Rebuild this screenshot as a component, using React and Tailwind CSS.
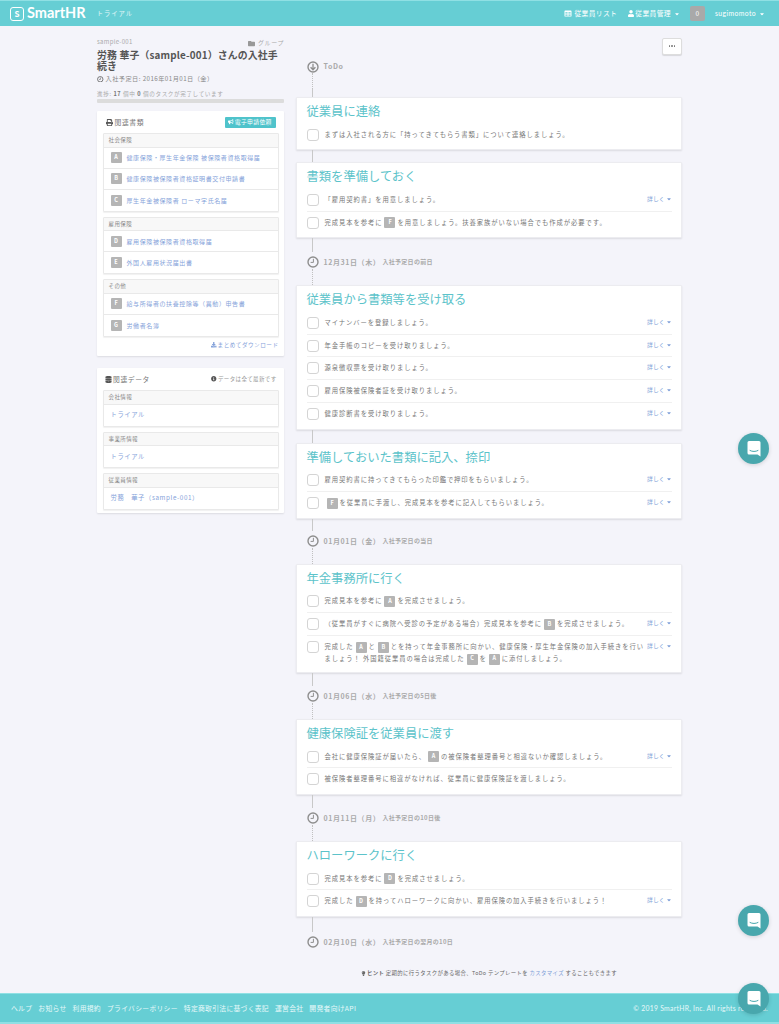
import React from "react";
import { FaTable, FaUser, FaFolder, FaPrint, FaDatabase, FaInfoCircle, FaDownload, FaCaretDown, FaBullhorn, FaLightbulb } from "react-icons/fa";

const Clock = ({ className }) => (
  <svg viewBox="0 0 12 12" className={className} fill="none" stroke="currentColor">
    <circle cx="6" cy="6" r="5" strokeWidth="1.4" />
    <path d="M6.4 2.8V6.4H3.6" strokeWidth="1" />
  </svg>
);

const DownCircle = ({ className }) => (
  <svg viewBox="0 0 12 12" className={className} fill="none" stroke="currentColor">
    <circle cx="6" cy="6" r="5" strokeWidth="1.4" />
    <path d="M6 2.8V8.4M3.6 6.2L6 8.8L8.4 6.2" strokeWidth="1.3" />
  </svg>
);

const B = ({ c }) => (
  <span className="inline-flex items-center justify-center w-[11px] h-[11px] mx-[2px] rounded-[1px] bg-[#b5b5b5] text-white text-[5.5px] font-bold tracking-normal align-middle leading-none">{c}</span>
);

const Detail = () => (
  <span className="ml-auto pt-[1px] shrink-0 flex items-center gap-[1px] text-[5.8px] leading-[8px] text-[#7f9fd8]">
    詳しく<FaCaretDown className="w-[6px] h-[6px]" />
  </span>
);

const Task = ({ children, detail, last, tall }) => (
  <div className={`flex items-start mx-[9.5px] pt-[5px] ${tall ? "h-[33px]" : "h-[22.8px]"} ${last ? "" : "border-b border-[#f0f0f0]"}`}>
    <span className="w-[12px] h-[12px] shrink-0 bg-white rounded-[3px] border border-[#d4d4d4]" />
    <div className={`ml-[6px] text-[6.3px] leading-[11.4px] tracking-[0.95px] text-[#777] ${detail ? "w-[318px]" : ""}`}>{children}</div>
    {detail && <Detail />}
  </div>
);

const Card = ({ title, children }) => (
  <section className="bg-white rounded-[1px] border border-[#ececf0] shadow-[0_1px_2px_rgba(0,0,0,0.1)] pb-[3px]">
    <h2 className="h-[25.5px] pl-[9.5px] pt-[5px] text-[12.3px] leading-[16px] font-normal text-[#5cc3ca]">{title}</h2>
    {children}
  </section>
);

const Solid = ({ h }) => <div className="ml-[16px] w-px bg-[#c8c8c8]" style={{ height: h }} />;
const Dotted = ({ h }) => <div className="ml-[16px] w-0 border-l border-dotted border-[#c0c0c0]" style={{ height: h }} />;

const DateRow = ({ main, sub }) => (
  <div className="flex items-center h-[12px] mt-[4px] mb-[1px] ml-[10.5px] text-[7px] leading-[12px] font-bold text-[#aaa] tracking-[0.6px]">
    <Clock className="w-[12px] h-[12px] text-[#8e8e8e] mr-[5px]" />
    <span>{main}</span>
    <span className="ml-[2px] text-[6px] tracking-[0.3px]">{sub}</span>
  </div>
);

const Group = ({ title, items, plain }) => (
  <div className="rounded-[1px] border border-[#e9e9e9] bg-white shadow-[0_1px_1px_rgba(0,0,0,0.06)]">
    <div className="h-[13.5px] bg-[#f8f8f8] border-b border-[#e9e9e9] px-[5px] text-[5.5px] leading-[13px] tracking-[0.4px] text-[#888]">{title}</div>
    {items.map(([l, t], i) => (
      <div key={t} className={`flex items-center h-[21px] pl-[7px] ${i < items.length - 1 ? "border-b border-[#e9e9e9]" : ""}`}>
        {l && <span className="flex items-center justify-center w-[11px] h-[11px] mr-[5px] rounded-[1px] bg-[#b5b5b5] text-white text-[5.5px] font-bold">{l}</span>}
        <span className={`text-[#86a3da] tracking-[0.6px] ${plain ? "text-[6.3px]" : "text-[6px]"}`}>{t}</span>
      </div>
    ))}
  </div>
);

const Chat = ({ className }) => (
  <div className={`absolute w-[31px] h-[31px] rounded-full bg-[#48a7ad] flex items-center justify-center shadow-[0_1px_4px_rgba(0,0,0,0.15)] ${className}`}>
    <svg viewBox="0 0 20 20" className="w-[20px] h-[20px]">
      <path d="M3.5 3.5a1.5 1.5 0 0 1 1.5-1.5h10a1.5 1.5 0 0 1 1.5 1.5V17.5L13.5 15.5H5a1.5 1.5 0 0 1-1.5-1.5z" fill="#fff" />
      <path d="M6 11.5c2.3 1.3 5.7 1.3 8 0" stroke="#48a7ad" strokeWidth="1" fill="none" strokeLinecap="round" />
    </svg>
  </div>
);

export default function App() {
  return (
    <div className="relative flex flex-col h-[1024px] overflow-hidden bg-[#f4f4fa] font-['Noto_Sans_CJK_JP','Noto_Sans',sans-serif]">
      <header className="h-[26px] shrink-0 flex items-center bg-[#66ced4] border-t border-[#8fe0e4] text-white">
        <div className="ml-[10px] w-[14px] h-[14px] rounded-[3px] border-[1.5px] border-white flex items-center justify-center text-[8px] font-bold leading-none">S</div>
        <span className="ml-[3px] text-[14.5px] leading-none font-bold font-['Lato',sans-serif]">SmartHR</span>
        <span className="ml-[11px] text-[6.3px] tracking-[1px] text-[#e3f7f8]">トライアル</span>
        <div className="ml-auto flex items-center text-[6.8px] tracking-[0.35px]">
          <FaTable className="w-[8px] h-[7px] mr-[2px]" />
          <span>従業員リスト</span>
          <FaUser className="ml-[11px] mr-[1px] w-[6px] h-[7px]" />
          <span>従業員管理</span>
          <FaCaretDown className="ml-[3px] w-[6px] h-[6px]" />
          <span className="ml-[10px] w-[15px] h-[15px] rounded-[2px] bg-[#a9a9a9] flex items-center justify-center text-[6.5px]">0</span>
          <span className="ml-[10px] font-['Lato',sans-serif] tracking-[0.4px]">sugimomoto</span>
          <FaCaretDown className="ml-[3px] mr-[14px] w-[6px] h-[6px]" />
        </div>
      </header>

      <main className="flex-1 flex items-start ml-[97px]">
        <aside className="w-[187px] pt-[11px]">
          <div className="flex justify-between items-start h-[10px] text-[6px] leading-[10px] text-[#aaa]">
            <span className="tracking-[0.3px]">sample-001</span>
            <span className="flex items-center gap-[3px] mt-[1px] tracking-[0.6px]"><FaFolder className="w-[7px] h-[7px] text-[#999]" />グループ</span>
          </div>
          <h1 className="mt-[2.5px] text-[9.9px] leading-[11px] font-bold text-[#555] tracking-[0.15px]">労務 華子（sample-001）さんの入社手続き</h1>
          <div className="mt-[2.5px] flex items-center text-[6.2px] leading-[10px] text-[#888] tracking-[0.45px]">
            <Clock className="w-[6.5px] h-[6.5px] text-[#555] mr-[2px]" />入社予定日: 2016年01月01日（金）
          </div>
          <div className="mt-[5px] text-[5.6px] leading-[10px] text-[#aaa] tracking-[0.6px]">進捗: <b className="text-[#777]">17</b> 個中 <b className="text-[#777]">0</b> 個のタスクが完了しています</div>
          <div className="h-[4px] rounded-[1px] bg-[#dcdcdc]" />

          <section className="mt-[8px] h-[245px] bg-white rounded-[1px] shadow-[0_1px_2px_rgba(0,0,0,0.1)] px-[5.5px]">
            <div className="flex items-center h-[22px] pl-[3px]">
              <FaPrint className="w-[7px] h-[7px] text-[#555] mr-[2px]" />
              <span className="text-[6.8px] tracking-[0.6px] text-[#777]">関連書類</span>
              <span className="ml-auto mr-[3px] h-[11px] w-[51px] rounded-[1px] bg-[#4fc3cb] text-white text-[5.8px] tracking-[0.35px] flex items-center justify-center gap-[1px]"><FaBullhorn className="w-[5.5px] h-[5.5px]" />電子申請依頼</span>
            </div>
            <div className="flex flex-col gap-[5px]">
              <Group title="社会保険" items={[["A", "健康保険・厚生年金保険 被保険者資格取得届"], ["B", "健康保険被保険者資格証明書交付申請書"], ["C", "厚生年金被保険者 ローマ字氏名届"]]} />
              <Group title="雇用保険" items={[["D", "雇用保険被保険者資格取得届"], ["E", "外国人雇用状況届出書"]]} />
              <Group title="その他" items={[["F", "給与所得者の扶養控除等（異動）申告書"], ["G", "労働者名簿"]]} />
            </div>
            <div className="mt-[3.5px] flex items-center justify-end text-[5.6px] leading-[10px] tracking-[0.5px] text-[#86a3da]">
              <FaDownload className="w-[5.5px] h-[5.5px] mr-[1px]" />まとめてダウンロード
            </div>
          </section>

          <section className="mt-[12px] h-[145px] bg-white rounded-[1px] shadow-[0_1px_2px_rgba(0,0,0,0.1)] px-[5.5px]">
            <div className="flex items-center h-[22px] pl-[2px]">
              <FaDatabase className="w-[7px] h-[7px] text-[#555] mr-[1.5px]" />
              <span className="text-[6.8px] tracking-[0.6px] text-[#777]">関連データ</span>
              <span className="ml-auto mr-[2px] flex items-center text-[5.5px] tracking-[0.35px] text-[#999]"><FaInfoCircle className="w-[5.5px] h-[5.5px] text-[#555] mr-[1px]" />データは全て最新です</span>
            </div>
            <div className="flex flex-col gap-[5px]">
              <Group plain title="会社情報" items={[[null, "トライアル"]]} />
              <Group plain title="事業所情報" items={[[null, "トライアル"]]} />
              <Group plain title="従業員情報" items={[[null, "労務　華子（sample-001）"]]} />
            </div>
          </section>
        </aside>

        <div className="ml-[12px] w-[386px] pt-[11.5px]">
          <div className="flex justify-end h-[17px]">
            <span className="w-[20px] h-[17px] bg-white rounded-[2px] border border-[#ddd] shadow-[0_1px_1px_rgba(0,0,0,0.12)] flex items-center justify-center gap-[1px]">
              <i className="w-[1.5px] h-[1.5px] rounded-full bg-[#777]" /><i className="w-[1.5px] h-[1.5px] rounded-full bg-[#777]" /><i className="w-[1.5px] h-[1.5px] rounded-full bg-[#777]" />
            </span>
          </div>
          <div className="mt-[6px] flex items-center h-[12px] ml-[10.5px] text-[7px] font-bold tracking-[0.6px] text-[#aaa]">
            <DownCircle className="w-[12px] h-[12px] text-[#8e8e8e] mr-[5px]" />ToDo
          </div>
          <Dotted h={16.5} />
          <Solid h={8} />

          <Card title="従業員に連絡">
            <Task last>まずは入社される方に「持ってきてもらう書類」について連絡しましょう。</Task>
          </Card>
          <Solid h={12} />
          <Card title="書類を準備しておく">
            <Task detail>「雇用契約書」を用意しましょう。</Task>
            <Task last>完成見本を参考に<B c="F" />を用意しましょう。扶養家族がいない場合でも作成が必要です。</Task>
          </Card>
          <Solid h={14} />
          <DateRow main="12月31日（木）" sub="入社予定日の前日" />
          <Dotted h={16} />

          <Card title="従業員から書類等を受け取る">
            <Task detail>マイナンバーを登録しましょう。</Task>
            <Task detail>年金手帳のコピーを受け取りましょう。</Task>
            <Task detail>源泉徴収票を受け取りましょう。</Task>
            <Task detail>雇用保険被保険者証を受け取りましょう。</Task>
            <Task detail last>健康診断書を受け取りましょう。</Task>
          </Card>
          <Solid h={13} />
          <Card title="準備しておいた書類に記入、捺印">
            <Task detail>雇用契約書に持ってきてもらった印鑑で押印をもらいましょう。</Task>
            <Task detail last><B c="F" />を従業員に手渡し、完成見本を参考に記入してもらいましょう。</Task>
          </Card>
          <Solid h={12} />
          <DateRow main="01月01日（金）" sub="入社予定日の当日" />
          <Dotted h={16} />

          <Card title="年金事務所に行く">
            <Task>完成見本を参考に<B c="A" />を完成させましょう。</Task>
            <Task detail>（従業員がすぐに病院へ受診の予定がある場合）完成見本を参考に<B c="B" />を完成させましょう。</Task>
            <Task detail last tall>
              <div className="whitespace-nowrap">完成した<B c="A" />と<B c="B" />とを持って年金事務所に向かい、健康保険・厚生年金保険の加入手続きを行い</div>
              <div className="whitespace-nowrap">ましょう！ 外国籍従業員の場合は完成した<B c="C" />を<B c="A" />に添付しましょう。</div>
            </Task>
          </Card>
          <Solid h={13} />
          <DateRow main="01月06日（水）" sub="入社予定日の5日後" />
          <Dotted h={16} />

          <Card title="健康保険証を従業員に渡す">
            <Task detail>会社に健康保険証が届いたら、<B c="A" />の被保険者整理番号と相違ないか確認しましょう。</Task>
            <Task last>被保険者整理番号に相違がなければ、従業員に健康保険証を渡しましょう。</Task>
          </Card>
          <Solid h={13} />
          <DateRow main="01月11日（月）" sub="入社予定日の10日後" />
          <Dotted h={16} />

          <Card title="ハローワークに行く">
            <Task>完成見本を参考に<B c="D" />を完成させましょう。</Task>
            <Task detail last>完成した<B c="D" />を持ってハローワークに向かい、雇用保険の加入手続きを行いましょう！</Task>
          </Card>
          <Solid h={15} />
          <DateRow main="02月10日（水）" sub="入社予定日の翌月の10日" />

          <p className="mt-[20px] flex items-center justify-center text-[5.4px] leading-[10px] tracking-[0.35px] text-[#666] whitespace-nowrap">
            <FaLightbulb className="w-[5px] h-[5px] mr-[1px]" /><b>ヒント</b>&nbsp;定期的に行うタスクがある場合、ToDo テンプレートを&nbsp;<span className="text-[#7f9fd8]">カスタマイズ</span>&nbsp;することもできます
          </p>
        </div>
      </main>

      <footer className="h-[31px] shrink-0 flex items-center bg-[#66ced4] border-t border-[#8fe0e4] border-b-2 border-b-[#8fe0e4] px-[11px] text-[6.8px] tracking-[0.3px] text-[#e8f9fa]">
        <nav className="flex gap-[6px]">
          <span>ヘルプ</span><span>お知らせ</span><span>利用規約</span><span>プライバシーポリシー</span><span>特定商取引法に基づく表記</span><span>運営会社</span><span>開発者向けAPI</span>
        </nav>
        <span className="ml-auto font-['Lato',sans-serif]">© 2019 SmartHR, Inc. All rights reserved.</span>
      </footer>

      <Chat className="left-[738px] top-[433px]" />
      <Chat className="left-[738px] top-[905px]" />
      <Chat className="left-[738px] top-[983px]" />
    </div>
  );
}
